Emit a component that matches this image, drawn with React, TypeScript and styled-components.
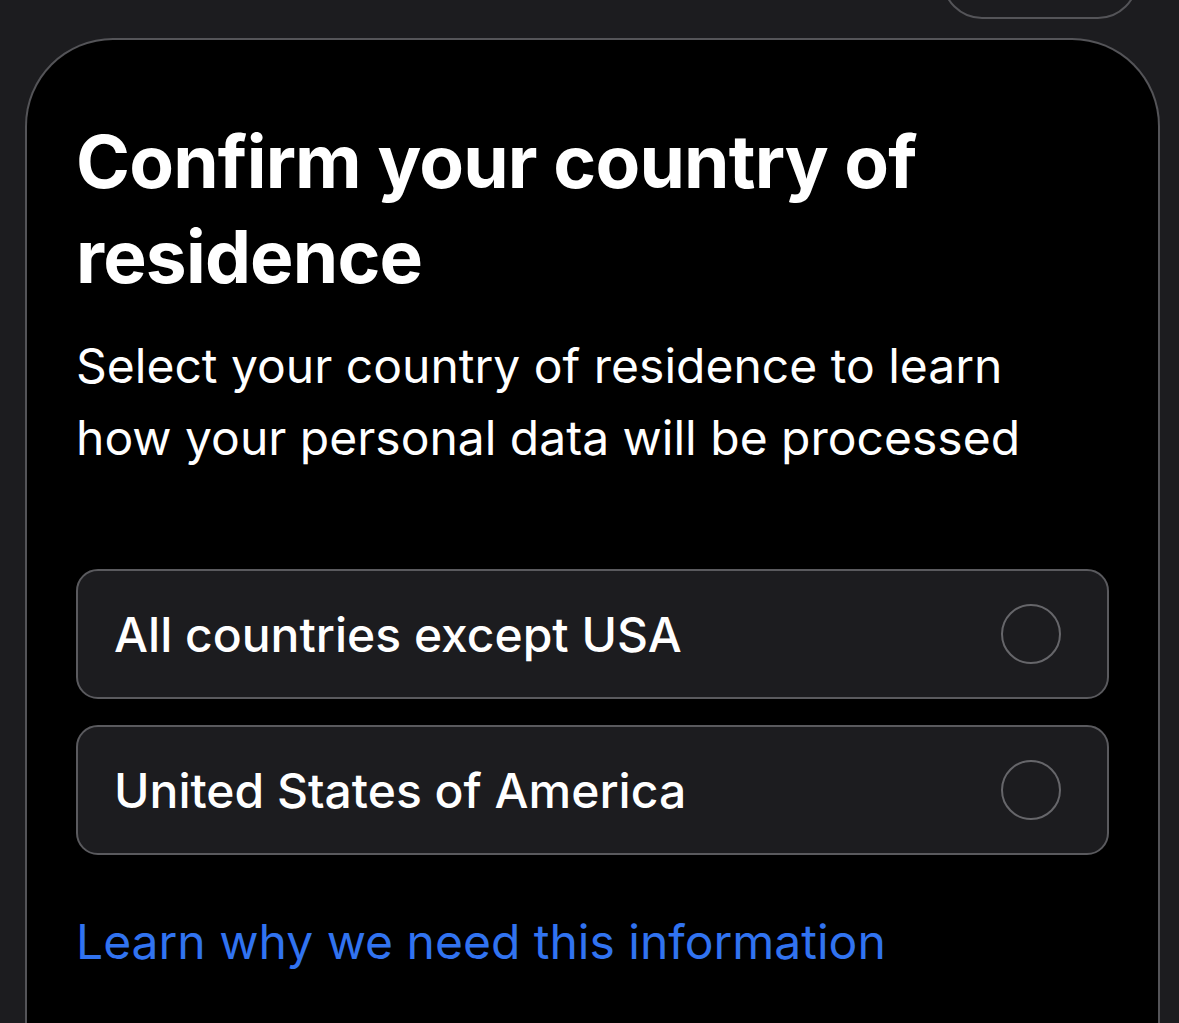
import React from "react";
import styled, { createGlobalStyle } from "styled-components";

const Global = createGlobalStyle`
  html, body {
    margin: 0;
    padding: 0;
    background: #1c1c1f;
    font-family: Inter, "Noto Sans", "Liberation Sans", sans-serif;
    -webkit-font-smoothing: antialiased;
  }
  * { box-sizing: border-box; }
`;

const Page = styled.div`
  display: flex;
  flex-direction: column;
  gap: 19px;
  margin-top: -61px;
  min-height: 1100px;
  background: #1c1c1f;
`;

const TopBar = styled.div`
  display: flex;
  justify-content: flex-end;
  padding-right: 41px;
`;

const PillButton = styled.button`
  width: 196px;
  height: 80px;
  border-radius: 40px;
  border: 2px solid #545458;
  background: transparent;
`;

const Card = styled.section`
  margin: 0 19px 0 25px;
  min-height: 1000px;
  background: #000;
  border: 2px solid #545458;
  border-bottom: none;
  border-radius: 88px 88px 0 0;
  padding: 74px 49px 0 49px;
  display: flex;
  flex-direction: column;
`;

const Title = styled.h1`
  margin: 0;
  color: #fff;
  font-size: 73px;
  line-height: 95px;
  font-weight: 700;
  letter-spacing: -0.8px;
`;

const Subtitle = styled.p`
  margin: 26px 0 0;
  color: #fff;
  font-size: 48px;
  line-height: 72px;
  font-weight: 400;
`;

const Options = styled.div`
  margin-top: 95px;
  display: flex;
  flex-direction: column;
  gap: 26px;
`;

const Option = styled.label`
  height: 130px;
  display: flex;
  align-items: center;
  justify-content: space-between;
  padding: 0 46px 0 36px;
  background: #1c1c1f;
  border: 2px solid #5a5a5e;
  border-radius: 22px;
  color: #fff;
  font-size: 48px;
  font-weight: 500;
`;

const Radio = styled.span`
  width: 60px;
  height: 60px;
  border-radius: 50%;
  border: 2px solid #66666a;
  flex: none;
`;

const Link = styled.a`
  margin-top: 51px;
  color: #3173f0;
  font-size: 48px;
  line-height: 72px;
  text-decoration: none;
`;

const options = ["All countries except USA", "United States of America"];

export default function App() {
  return (
    <>
      <Global />
      <Page>
        <TopBar>
          <PillButton aria-label="menu" />
        </TopBar>
        <Card>
          <Title>Confirm your country of residence</Title>
          <Subtitle>
            Select your country of residence to learn how your personal data will be processed
          </Subtitle>
          <Options>
            {options.map((o) => (
              <Option key={o}>
                <span>{o}</span>
                <Radio />
              </Option>
            ))}
          </Options>
          <Link href="#">Learn why we need this information</Link>
        </Card>
      </Page>
    </>
  );
}
